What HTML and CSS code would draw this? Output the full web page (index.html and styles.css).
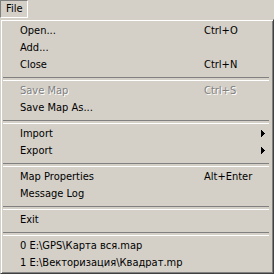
FILE: index.html
```html
<!DOCTYPE html>
<html lang="ru">
<head>
<meta charset="utf-8">
<title>File menu</title>
<link rel="stylesheet" href="styles.css">
</head>
<body>
	<div class="menubar">
		<span class="menu-title">File</span>
	</div>

	<div class="menu">
		<div class="item"><span class="label">Open...</span><span class="key">Ctrl+O</span></div>
		<div class="item"><span class="label">Add...</span></div>
		<div class="item"><span class="label">Close</span><span class="key">Ctrl+N</span></div>
		<div class="sep"></div>
		<div class="item disabled"><span class="label">Save Map</span><span class="key">Ctrl+S</span></div>
		<div class="item"><span class="label">Save Map As...</span></div>
		<div class="sep"></div>
		<div class="item"><span class="label">Import</span><span class="key"></span>
			<svg class="arrow" width="4" height="7" viewBox="0 0 4 7" shape-rendering="crispEdges"><rect x="0" y="0" width="1" height="7"/><rect x="1" y="1" width="1" height="5"/><rect x="2" y="2" width="1" height="3"/><rect x="3" y="3" width="1" height="1"/></svg>
		</div>
		<div class="item"><span class="label">Export</span><span class="key"></span>
			<svg class="arrow" width="4" height="7" viewBox="0 0 4 7" shape-rendering="crispEdges"><rect x="0" y="0" width="1" height="7"/><rect x="1" y="1" width="1" height="5"/><rect x="2" y="2" width="1" height="3"/><rect x="3" y="3" width="1" height="1"/></svg>
		</div>
		<div class="sep"></div>
		<div class="item"><span class="label">Map Properties</span><span class="key">Alt+Enter</span></div>
		<div class="item"><span class="label">Message Log</span></div>
		<div class="sep"></div>
		<div class="item"><span class="label">Exit</span></div>
		<div class="sep"></div>
		<div class="item"><span class="label wide">0 E:\GPS\Карта вся.map</span></div>
		<div class="item"><span class="label wide">1 E:\Векторизация\Квадрат.mp</span></div>
	</div>
</body>
</html>
```

FILE: styles.css
```css
* {
	box-sizing: border-box;
}
body {
	margin: 0;
	background: #d4d0c8;
	font-family: "DejaVu Sans Condensed", "Liberation Sans", Arial, sans-serif;
	font-size: 11px;
	color: #000;
}
.menubar {
	height: 19px;
	padding-bottom: 1px;
}
.menu-title {
	display: inline-block;
	height: 18px;
	line-height: 16px;
	padding: 0 5px 0 5px;
	border-top: 1px solid #808080;
	border-left: 1px solid #808080;
	border-right: 1px solid #fff;
	border-bottom: 1px solid #fff;
}
.menu {
	width: 274px;
	border-top: 1px solid #d4d0c8;
	border-left: 1px solid #d4d0c8;
	border-right: 1px solid #404040;
	border-bottom: 1px solid #404040;
	box-shadow: inset 1px 1px 0 #fff, inset -1px -1px 0 #808080;
	padding: 2px 4px 2px 2px;
}
.item {
	display: flex;
	align-items: center;
	height: 17px;
	padding-left: 17px;
	white-space: nowrap;
}
.label {
	width: 184px;
}
.label.wide {
	width: auto;
}
.key {
	flex: 1;
}
.arrow {
	margin-right: 4px;
	fill: #000;
}
.disabled {
	color: #808080;
	text-shadow: 1px 1px 0 #fff;
}
.sep {
	height: 9px;
	padding-top: 4px;
}
.sep::before {
	content: "";
	display: block;
	height: 2px;
	border-top: 1px solid #808080;
	border-bottom: 1px solid #fff;
}
```
